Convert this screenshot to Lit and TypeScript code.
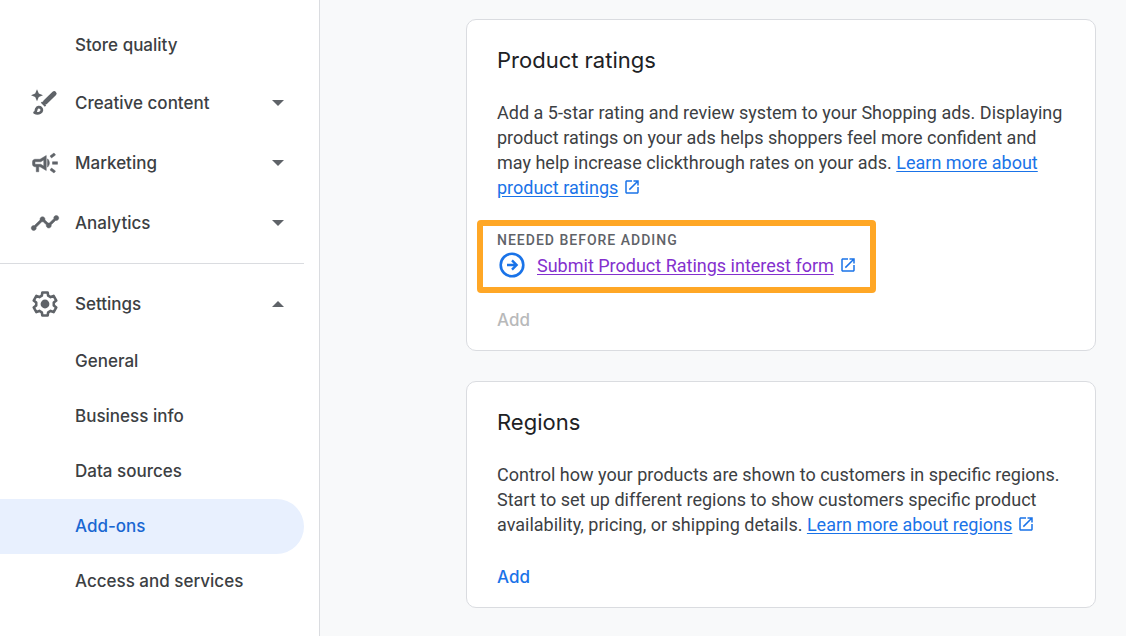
import { LitElement, html, css, svg, nothing } from "lit";
import { customElement, property } from "lit/decorators.js";
import { classMap } from "lit/directives/class-map.js";

// Outline of a six-toothed gear centred in a 30-unit box.
const gearOutline = (() => {
  const points: string[] = [];
  for (let tooth = 0; tooth < 6; tooth++) {
    for (const [offset, radius] of [[-21, 8.9], [-13, 11.8], [13, 11.8], [21, 8.9]]) {
      const angle = ((tooth * 60 - 90 + offset) * Math.PI) / 180;
      points.push(`${(15 + radius * Math.cos(angle)).toFixed(2)} ${(15 + radius * Math.sin(angle)).toFixed(2)}`);
    }
  }
  return `M${points.join("L")}Z`;
})();

const icons = {
  creative: svg`
    <path d="M7 1.2 8.8 5.4 13 7.2 8.8 9 7 13.2 5.2 9 1 7.2 5.2 5.4Z"/>
    <path d="M24.2 5.6 15.2 14.2" stroke="currentColor" stroke-width="4.8" stroke-linecap="round"/>
    <path d="M12.2 13.4 16.2 17.4 14.8 18.8 10.8 14.8Z"/>
    <path d="M4.6 24.6C6.4 24.2 5.6 22.4 6.4 20.8 7.3 19 9.6 18.6 11 20 12.4 21.4 12 23.6 10.2 24.6 8.8 25.4 6.2 25.5 4.6 24.6Z" fill="none" stroke="currentColor" stroke-width="2.8" stroke-linejoin="round"/>`,
  marketing: svg`<g transform="scale(1.25)"><path stroke="currentColor" stroke-width=".4" d="M18 11v2h4v-2h-4zM16 17.61c.96.71 2.21 1.65 3.2 2.39.4-.53.8-1.07 1.2-1.6-.99-.74-2.24-1.68-3.2-2.4-.4.54-.8 1.08-1.2 1.61zM20.4 5.6c-.4-.53-.8-1.07-1.2-1.6-.99.74-2.24 1.68-3.2 2.4.4.53.8 1.07 1.2 1.6.96-.72 2.21-1.65 3.2-2.4zM4 9c-1.1 0-2 .9-2 2v2c0 1.1.9 2 2 2h1v4h2v-4h1l5 3V6L8 9H4zm5.03 1.71L11 9.53v4.94l-1.97-1.18-.48-.29H4v-2h4.55l.48-.29zM15.5 12c0-1.33-.58-2.53-1.5-3.35v6.69c.92-.81 1.5-2.01 1.5-3.34z"/></g>`,
  analytics: svg`<g transform="scale(1.25)"><path stroke="currentColor" stroke-width=".4" d="M23 8c0 1.1-.9 2-2 2-.18 0-.35-.02-.51-.07l-3.56 3.55c.05.16.07.34.07.52 0 1.1-.9 2-2 2s-2-.9-2-2c0-.18.02-.36.07-.52l-2.55-2.55c-.16.05-.34.07-.52.07s-.36-.02-.52-.07l-4.55 4.56c.05.16.07.33.07.51 0 1.1-.9 2-2 2s-2-.9-2-2 .9-2 2-2c.18 0 .35.02.51.07l4.56-4.55C8.02 9.36 8 9.18 8 9c0-1.1.9-2 2-2s2 .9 2 2c0 .18-.02.36-.07.52l2.55 2.55c.16-.05.34-.07.52-.07s.36.02.52.07l3.55-3.56C19.02 8.35 19 8.18 19 8c0-1.1.9-2 2-2s2 .9 2 2z"/></g>`,
  settings: svg`
    <path d=${gearOutline} fill="none" stroke="currentColor" stroke-width="2.6" stroke-linejoin="round"/>
    <circle cx="15" cy="15" r="4.4"/>`,
};

type IconName = keyof typeof icons;

const externalIcon = html`<svg class="external" viewBox="0 0 24 24" aria-hidden="true"><path d="M19 19H5V5h7V3H5c-1.11 0-2 .9-2 2v14c0 1.1.89 2 2 2h14c1.1 0 2-.9 2-2v-7h-2v7zM14 3v2h3.59l-9.83 9.83 1.41 1.41L19 6.41V10h2V3h-7z"/></svg>`;

@customElement("side-nav")
class SideNav extends LitElement {
  @property() current = "";

  static styles = css`
    :host {
      display: block;
      box-sizing: border-box;
      padding: 18px 15px 18px 0;
      background: #fff;
      border-right: 1px solid #dadce0;
      font: 500 17px/24px Inter, sans-serif;
      color: #3c4043;
    }
    .item {
      box-sizing: border-box;
      display: flex;
      align-items: center;
      width: 100%;
      height: 55px;
      padding: 0 20px 2px 75px;
      border: 0;
      background: none;
      font: inherit;
      color: inherit;
      text-align: left;
      text-decoration: none;
      border-radius: 0 28px 28px 0;
    }
    .group {
      height: 60px;
      gap: 15px;
      padding: 0 20px 0 30px;
    }
    .label {
      flex: 1;
    }
    .current {
      background: #e8f0fe;
      color: #1967d2;
    }
    .icon {
      width: 30px;
      height: 30px;
      fill: currentColor;
      color: #5f6368;
    }
    .arrow {
      width: 12px;
      height: 6px;
      fill: #5f6368;
    }
    .divider {
      margin: 10px 0;
      border: 0;
      border-top: 1px solid #dadce0;
    }
  `;

  private group(icon: IconName, label: string, open = false) {
    return html`<button class="item group" type="button" aria-expanded=${open}>
      <svg class="icon" viewBox="0 0 30 30" aria-hidden="true">${icons[icon]}</svg>
      <span class="label">${label}</span>
      <svg class="arrow" viewBox="0 0 12 6" aria-hidden="true">
        <path d=${open ? "M0 6 6 0l6 6z" : "M0 0l6 6 6-6z"} />
      </svg>
    </button>`;
  }

  private link(label: string) {
    const current = label === this.current;
    return html`<a
      class=${classMap({ item: true, current })}
      href="#"
      aria-current=${current ? "page" : nothing}
      >${label}</a
    >`;
  }

  render() {
    return html`<nav>
      ${this.link("Store quality")} ${this.group("creative", "Creative content")}
      ${this.group("marketing", "Marketing")} ${this.group("analytics", "Analytics")}
      <hr class="divider" />
      ${this.group("settings", "Settings", true)}
      ${["General", "Business info", "Data sources", "Add-ons", "Access and services"].map((l) => this.link(l))}
    </nav>`;
  }
}

@customElement("app-root")
class AppRoot extends LitElement {
  static styles = css`
    :host {
      display: grid;
      grid-template-columns: 320px minmax(0, 1fr);
      min-height: 100vh;
      background: #f8f9fa;
      font: 400 18px/25px Roboto, sans-serif;
      color: #3c4043;
    }
    .main {
      display: flex;
      flex-direction: column;
      gap: 30px;
      padding: 19px 30px 28px 146px;
    }
    .card {
      padding: 26px 30px 12px;
      background: #fff;
      border: 1px solid #dadce0;
      border-radius: 10px;
    }
    .title {
      margin: 0 0 26px;
      font: 400 22px/28px Inter, sans-serif;
      color: #202124;
    }
    .text {
      margin: 0;
    }
    .link {
      color: #1a73e8;
      text-underline-offset: 2px;
    }
    .visited {
      color: #8430ce;
    }
    .external {
      width: 18px;
      height: 18px;
      margin-left: 5px;
      vertical-align: -2px;
      fill: #1a73e8;
    }
    .needed {
      width: fit-content;
      margin: 20px 0 9px -20px;
      padding: 4px 13px 7px 14px;
      border: 6px solid #ffa726;
      box-sizing: border-box;
      border-radius: 4px;
    }
    .caption {
      margin: 0;
      font: 500 14px/20px Roboto, sans-serif;
      letter-spacing: 1px;
      text-transform: uppercase;
      color: #5f6368;
    }
    .step {
      display: flex;
      align-items: center;
      gap: 10px;
      height: 30px;
    }
    .go {
      width: 30px;
      height: 30px;
      fill: none;
      stroke: #1a73e8;
    }
    .add {
      display: block;
      height: 36px;
      padding: 0;
      border: 0;
      background: none;
      font: 500 17px/24px Inter, sans-serif;
      color: #1a73e8;
    }
    .add:disabled {
      color: #b8b9ba;
    }
    .spaced {
      margin-top: 22px;
    }
  `;

  render() {
    return html`
      <side-nav current="Add-ons"></side-nav>
      <main class="main">
        <section class="card">
          <h2 class="title">Product ratings</h2>
          <p class="text">
            Add a 5-star rating and review system to your Shopping ads. Displaying product ratings on your ads helps
            shoppers feel more confident and may help increase clickthrough rates on your ads.
            <a class="link" href="#">Learn more about product ratings</a>${externalIcon}
          </p>
          <div class="needed">
            <h3 class="caption">Needed before adding</h3>
            <div class="step">
              <svg class="go" viewBox="0 0 30 30" aria-hidden="true">
                <circle cx="15" cy="15" r="11.3" stroke-width="2.6" />
                <path d="M10 15h9M15 10.4l4.6 4.6-4.6 4.6" stroke-width="2.4" />
              </svg>
              <span><a class="link visited" href="#">Submit Product Ratings interest form</a>${externalIcon}</span>
            </div>
          </div>
          <button class="add" type="button" disabled>Add</button>
        </section>
        <section class="card">
          <h2 class="title">Regions</h2>
          <p class="text">
            Control how your products are shown to customers in specific regions. Start to set up different regions to
            show customers specific product availability, pricing, or shipping details.
            <a class="link" href="#">Learn more about regions</a>${externalIcon}
          </p>
          <button class="add spaced" type="button">Add</button>
        </section>
      </main>
    `;
  }
}
